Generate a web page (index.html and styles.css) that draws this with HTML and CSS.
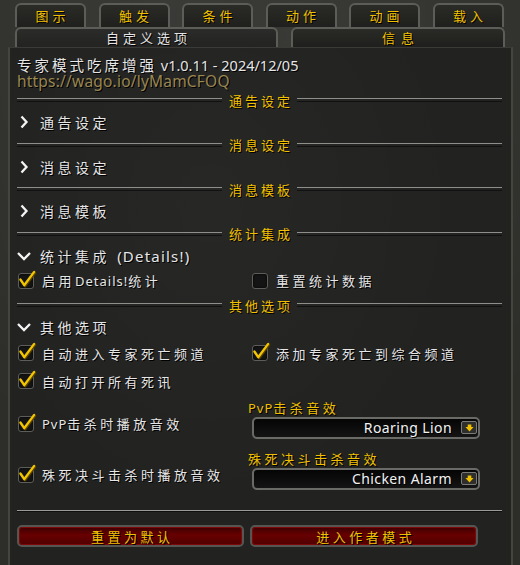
FILE: index.html
```html
<!DOCTYPE html>
<html lang="zh-CN">
<head>
    <meta charset="UTF-8">
    <meta name="viewport" content="width=device-width, initial-scale=1.0">
    <title>自定义选项</title>
    <link rel="stylesheet" href="styles.css">
</head>
<body>
<div class="frame">
    <div class="tabs tabs-top">
        <div class="tab">图示</div>
        <div class="tab">触发</div>
        <div class="tab">条件</div>
        <div class="tab">动作</div>
        <div class="tab">动画</div>
        <div class="tab">载入</div>
    </div>
    <div class="tabs tabs-sub">
        <div class="tab tab-active">自定义选项</div>
        <div class="tab tab-info">信息</div>
    </div>

    <div class="panel">
        <div class="title"><span class="cn">专家模式吃席增强</span> v1.0.11 - 2024/12/05</div>
        <div class="url">https://wago.io/lyMamCFOQ</div>

        <div class="divider"><span>通告设定</span></div>
        <div class="group">
            <svg class="chev" viewBox="0 0 14 14"><polyline points="4.5,1.5 9.5,7 4.5,12.5"/></svg>
            <span>通告设定</span>
        </div>

        <div class="divider"><span>消息设定</span></div>
        <div class="group">
            <svg class="chev" viewBox="0 0 14 14"><polyline points="4.5,1.5 9.5,7 4.5,12.5"/></svg>
            <span>消息设定</span>
        </div>

        <div class="divider"><span>消息模板</span></div>
        <div class="group">
            <svg class="chev" viewBox="0 0 14 14"><polyline points="4.5,1.5 9.5,7 4.5,12.5"/></svg>
            <span>消息模板</span>
        </div>

        <div class="divider"><span>统计集成</span></div>
        <div class="group">
            <svg class="chev" viewBox="0 0 14 14"><polyline points="1,4 7,10 13,4"/></svg>
            <span>统计集成 <span class="en en-big">(Details!)</span></span>
        </div>
        <div class="checks row-details">
            <div class="check">
                <span class="box"><svg class="tick" viewBox="0 0 20 20"><polyline points="2.5,10 6.5,16 17,2"/></svg></span>
                <span class="label">启用<span class="en">Details!</span>统计</span>
            </div>
            <div class="check">
                <span class="box"></span>
                <span class="label">重置统计数据</span>
            </div>
        </div>

        <div class="divider"><span>其他选项</span></div>
        <div class="group">
            <svg class="chev" viewBox="0 0 14 14"><polyline points="1,4 7,10 13,4"/></svg>
            <span>其他选项</span>
        </div>
        <div class="checks row-a">
            <div class="check">
                <span class="box"><svg class="tick" viewBox="0 0 20 20"><polyline points="2.5,10 6.5,16 17,2"/></svg></span>
                <span class="label">自动进入专家死亡频道</span>
            </div>
            <div class="check">
                <span class="box"><svg class="tick" viewBox="0 0 20 20"><polyline points="2.5,10 6.5,16 17,2"/></svg></span>
                <span class="label">添加专家死亡到综合频道</span>
            </div>
        </div>
        <div class="checks row-b">
            <div class="check">
                <span class="box"><svg class="tick" viewBox="0 0 20 20"><polyline points="2.5,10 6.5,16 17,2"/></svg></span>
                <span class="label">自动打开所有死讯</span>
            </div>
        </div>

        <div class="sound sound-first">
            <div class="check">
                <span class="box"><svg class="tick" viewBox="0 0 20 20"><polyline points="2.5,10 6.5,16 17,2"/></svg></span>
                <span class="label"><span class="en">PvP</span>击杀时播放音效</span>
            </div>
            <div class="picker">
                <div class="picker-label"><span class="en">PvP</span>击杀音效</div>
                <div class="dropdown">
                    <span>Roaring Lion</span>
                    <span class="arrow"><svg viewBox="0 0 10 8"><polygon points="3,0 7,0 7,3 9.5,3 5,8 0.5,3 3,3"/></svg></span>
                </div>
            </div>
        </div>

        <div class="sound sound-second">
            <div class="check">
                <span class="box"><svg class="tick" viewBox="0 0 20 20"><polyline points="2.5,10 6.5,16 17,2"/></svg></span>
                <span class="label">殊死决斗击杀时播放音效</span>
            </div>
            <div class="picker">
                <div class="picker-label">殊死决斗击杀音效</div>
                <div class="dropdown">
                    <span>Chicken Alarm</span>
                    <span class="arrow"><svg viewBox="0 0 10 8"><polygon points="3,0 7,0 7,3 9.5,3 5,8 0.5,3 3,3"/></svg></span>
                </div>
            </div>
        </div>

        <div class="rule"></div>

        <div class="buttons">
            <button class="btn btn-reset">重置为默认</button>
            <button class="btn btn-author">进入作者模式</button>
        </div>
    </div>
</div>
</body>
</html>
```

FILE: styles.css
```css
* {
    margin: 0;
    padding: 0;
    box-sizing: border-box;
}

body {
    width: 520px;
    height: 565px;
    overflow: hidden;
    background-color: #2e2e2b;
    font-family: "Noto Sans", "Noto Sans CJK SC", sans-serif;
    color: #e6e6e6;
    text-shadow: 1px 1px 0 #000;
}

.frame {
    height: 565px;
    padding-top: 3px;
    background:
        radial-gradient(ellipse at 30% 0%, rgba(255, 255, 255, 0.06), transparent 60%),
        radial-gradient(ellipse at 80% 10%, rgba(255, 255, 255, 0.04), transparent 50%),
        #2d2d2a;
}

/* tabs */

.tabs {
    display: flex;
    padding-left: 15px;
}

.tabs-top {
    gap: 12.5px;
    height: 24px;
}

.tabs-top .tab {
    width: 71px;
}

.tab {
    height: 100%;
    border: 2px solid #5c5c58;
    border-bottom: none;
    border-radius: 6px 6px 0 0;
    background: linear-gradient(#2a2a27, #1f1f1d);
    color: #f0c000;
    font-size: 13px;
    letter-spacing: 4px;
    padding-left: 4px;
    text-align: center;
    line-height: 22px;
}

.tabs-sub {
    gap: 13px;
    height: 20px;
}

.tabs-sub .tab {
    line-height: 18px;
}

.tab-active {
    width: 263px;
    color: #e4e4e4;
    background: linear-gradient(#2b2b29, #232322);
}

.tab-info {
    width: 214px;
    letter-spacing: 6px;
    padding-left: 6px;
}

/* main panel */

.panel {
    margin-left: 8px;
    width: 505px;
    height: 518px;
    border-left: 2px solid #45453f;
    border-right: 2px solid #45453f;
    border-top: 1px solid #3a3a36;
    padding: 9px 9px 0 7px;
    background:
        radial-gradient(ellipse at 40% 30%, rgba(255, 255, 255, 0.025), transparent 60%),
        #222221;
}

.cn {
    letter-spacing: 3px;
}

.en {
    letter-spacing: 1px;
}

.en-big {
    font-size: 15px;
    letter-spacing: 1.2px;
}

.title {
    height: 16px;
    line-height: 16px;
    font-size: 14.5px;
    white-space: nowrap;
}

.url {
    height: 16px;
    line-height: 16px;
    font-size: 15.5px;
    color: #9a8650;
    letter-spacing: 0.2px;
}

.divider {
    display: flex;
    align-items: center;
    gap: 7px;
    height: 22px;
    color: #f0c000;
    font-size: 13px;
    letter-spacing: 3px;
}

.divider span {
    margin-right: -3px;
}

.divider::before,
.divider::after {
    content: "";
    flex: 1;
    height: 2px;
    border-top: 1px solid #8e8e8a;
    border-bottom: 1px solid #111;
}

.group {
    display: flex;
    align-items: center;
    height: 22.5px;
    font-size: 14px;
    letter-spacing: 3.5px;
}

.chev {
    width: 14px;
    height: 14px;
    margin-right: 9px;
    fill: none;
    stroke: #f4f4f4;
    stroke-width: 2.3;
}

/* checkboxes */

.checks {
    display: grid;
    grid-template-columns: 234px 1fr;
    align-items: center;
}

.row-details {
    height: 27px;
}

.row-a {
    height: 29px;
}

.row-b {
    height: 27px;
}

.check {
    display: flex;
    align-items: center;
    font-size: 13px;
    letter-spacing: 3.5px;
}

.box {
    position: relative;
    width: 16px;
    height: 16px;
    margin-left: 1px;
    margin-right: 8px;
    border: 1px solid #5d5d5a;
    border-radius: 3px;
    background: #141414;
    box-shadow: inset 0 0 2px #000;
}

.tick {
    position: absolute;
    left: -1px;
    top: -4px;
    width: 19px;
    height: 19px;
    fill: none;
    stroke: #f2c600;
    stroke-width: 2.4;
    stroke-linecap: round;
    stroke-linejoin: round;
    filter: drop-shadow(1px 1px 0 #5a4200);
}

/* sound pickers */

.sound {
    display: grid;
    grid-template-columns: 231px 1fr;
}

.sound-first {
    padding-top: 4px;
}

.sound-second {
    padding-top: 11px;
}

.sound .check {
    align-self: end;
    margin-bottom: 5.5px;
}

.picker-label {
    height: 18px;
    line-height: 18px;
    font-size: 13px;
    letter-spacing: 3.5px;
    color: #f0c000;
}

.dropdown {
    display: flex;
    align-items: center;
    justify-content: flex-end;
    margin-left: 4px;
    width: 228px;
    height: 22px;
    padding-right: 1px;
    border: 2px solid #6a6a66;
    border-radius: 5px;
    background: linear-gradient(#050505, #141414);
    font-size: 14px;
    letter-spacing: 0.4px;
    color: #f2f2f2;
}

.arrow {
    display: flex;
    align-items: center;
    justify-content: center;
    width: 16px;
    height: 13px;
    margin-left: 9px;
    border: 1px solid #7a7a76;
    border-radius: 2px;
    background: #2e2e2c;
}

.arrow svg {
    width: 9px;
    height: 8px;
    fill: #f0c000;
}

/* footer */

.rule {
    height: 2px;
    margin-top: 20px;
    border-top: 1px solid #9a9a96;
    border-bottom: 1px solid #0e0e0e;
}

.buttons {
    display: flex;
    gap: 6px;
    margin-top: 13.5px;
}

.btn {
    height: 22px;
    border: 2px solid #555552;
    border-radius: 5px;
    background: linear-gradient(#3c0000, #680000 45%, #500000);
    box-shadow: inset 0 0 0 1px #7e0808;
    color: #f0c000;
    font-family: "Noto Sans", "Noto Sans CJK SC", sans-serif;
    font-size: 13px;
    letter-spacing: 3.5px;
    padding-left: 3.5px;
    text-shadow: 1px 1px 0 #000;
}

.btn-reset {
    width: 227px;
}

.btn-author {
    width: 228px;
}
```
